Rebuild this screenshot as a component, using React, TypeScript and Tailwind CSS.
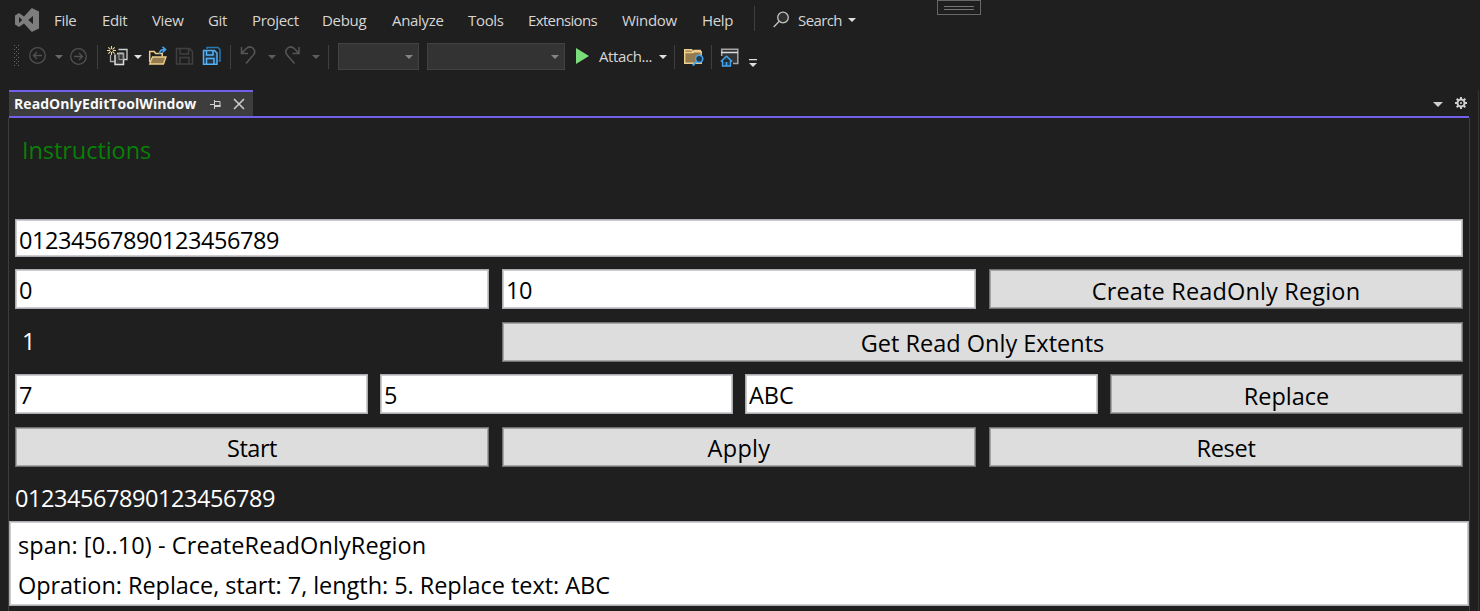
import React from "react";

const menus: [string, string][] = [
  ["File", "w-[48px]"],
  ["Edit", "w-[50px]"],
  ["View", "w-[56px]"],
  ["Git", "w-[44px]"],
  ["Project", "w-[70px]"],
  ["Debug", "w-[70px]"],
  ["Analyze", "w-[76px]"],
  ["Tools", "w-[60px]"],
  ["Extensions", "w-[94px] tracking-[-0.64px]"],
  ["Window", "w-[80px]"],
  ["Help", "w-[52px]"],
];

function Caret({ className = "" }: { className?: string }) {
  return (
    <svg className={`block shrink-0 ${className}`} width="8" height="4" viewBox="0 0 8 4" fill="currentColor">
      <path d="M0 0h8L4 4z" />
    </svg>
  );
}

function Field({ value, className = "" }: { value: string; className?: string }) {
  return (
    <div className={`flex items-center border border-[#abadb3] bg-white pl-[3px] text-black shadow-[inset_0_0_0_1px_#cdcdcf] ${className}`}>
      <span className="block leading-8">{value}</span>
    </div>
  );
}

function Button({ label, className = "pt-1" }: { label: string; className?: string }) {
  return (
    <button className={`flex h-10 items-center justify-center border border-[#707070] bg-[#dddddd] text-black shadow-[inset_0_0_0_1px_#a6a6a6] ${className}`}>
      <span className="block leading-8">{label}</span>
    </button>
  );
}

function Logo() {
  return (
    <svg className="block" width="26" height="26" viewBox="0 0 26 26">
      <path
        fill="#7d7d7d"
        fillRule="evenodd"
        d="M1 8.500 5 6l5 3.400L17.800 1 25 4.500v17L17.800 25 10 16.600 5 20l-4-2.500zM5 10v6l3.200-3zM19 9l-4.800 4 4.800 4z"
      />
    </svg>
  );
}

function ToolIcon({ children, className = "", w = 20 }: { children: React.ReactNode; className?: string; w?: number }) {
  return (
    <svg className={`mb-px block shrink-0 ${className}`} width={w} height="20" viewBox={`0 0 ${w} 20`} fill="none">
      {children}
    </svg>
  );
}

function Grip() {
  const dots = [];
  for (let r = 0; r < 11; r++) {
    const y = r * 2;
    if (r % 2 === 0) dots.push(<rect key={`a${r}`} x="0" y={y} width="1" height="1" />, <rect key={`b${r}`} x="4" y={y} width="1" height="1" />);
    else dots.push(<rect key={`c${r}`} x="2" y={y} width="1" height="1" />);
  }
  return (
    <svg className="mb-px ml-[14px] block" width="6" height="22" fill="#686868">
      {dots}
    </svg>
  );
}

function Toolbar() {
  return (
    <div className="flex h-[33px] items-center text-[#8a8a8a]">
      <Grip />
      <ToolIcon className="ml-2">
        <g stroke="#505050" strokeWidth="1.3">
          <circle cx="9.500" cy="9.500" r="7.800" />
          <path d="M14 9.500H5.500M9 6 5.500 9.500 9 13" />
        </g>
      </ToolIcon>
      <Caret className="ml-[7px] text-[#686868]" />
      <ToolIcon className="ml-[6px] mt-px">
        <g stroke="#505050" strokeWidth="1.3">
          <circle cx="9.500" cy="9.500" r="7.800" />
          <path d="M5 9.500h8.500M10 6l3.500 3.500L10 13" />
        </g>
      </ToolIcon>
      <div className="ml-[8px] h-6 w-px bg-[#3f3f3f]" />
      <ToolIcon className="ml-[9px]" w={21}>
        <path d="M11.500 3.500h8.500v10h-3" stroke="#d0d0d0" strokeWidth="1.300" />
        <path d="M3.500 9v6.500h4" stroke="#a8a8a8" strokeWidth="1.300" />
        <path d="M8 8.500V18.500h8.500V7.500H10" fill="#383838" stroke="#dedede" strokeWidth="1.500" />
        <path d="M12 7h4.500v6.500H12z" stroke="#9a9a9a" />
        <path d="M4.500 0v9M0 4.500h9M1.300 1.300l6.400 6.400M7.700 1.300 1.300 7.700" stroke="#f0d69a" strokeWidth="1.100" />
        <circle cx="4.500" cy="4.500" r="1.400" fill="#1f1f1f" />
      </ToolIcon>
      <Caret className="ml-[6px] text-[#e0e0e0]" />
      <ToolIcon className="ml-[6px]">
        <path d="M1.700 16V5.500h4.500l1.500 2h6.500v3" stroke="#efcf8b" strokeWidth="1.500" />
        <path d="M4.500 11H18l-2.500 7H1.700z" fill="#947b50" stroke="#efcf8b" strokeWidth="1.300" />
        <path d="M11.500 8c0-3 1.500-4.500 5-4.500M14.500.8l3 2.700-3 3" stroke="#45a5ee" strokeWidth="1.600" />
      </ToolIcon>
      <ToolIcon className="ml-[7px]">
        <path d="M1.500 2.500h13l3 3V18h-16zM5 2.500V8h8.500V2.500M5 18v-6.500h9V18" stroke="#404040" strokeWidth="1.500" />
      </ToolIcon>
      <ToolIcon className="ml-[7px]">
        <path d="M5 3V1.500h11l2 2V15h-1.500" stroke="#2878ad" strokeWidth="1.500" />
        <path d="M1.500 4.500h11l2.500 2.500V18.200H1.500z" fill="#213747" stroke="#55b1f5" strokeWidth="1.500" />
        <path d="M4.500 4.500V9H11V4.500M4.500 18v-5.500h7.500V18" stroke="#55b1f5" strokeWidth="1.500" />
      </ToolIcon>
      <div className="ml-[8px] h-6 w-px bg-[#3f3f3f]" />
      <ToolIcon className="ml-[9px]">
        <path d="M1.500 1v6.500H8M2 7l4-4.300c2.500-2.300 5-2.300 7-.5 2.200 2.200 2.100 5 0 7.200L6 17.500" stroke="#565656" strokeWidth="1.500" />
      </ToolIcon>
      <Caret className="ml-[8px] text-[#5d5d5d]" />
      <ToolIcon className="ml-[7px]">
        <path d="M16 1v6.500H9.500M15.500 7l-4-4.300C9 .4 6.500.4 4.500 2.200c-2.200 2.200-2.100 5 0 7.200l7 8.100" stroke="#565656" strokeWidth="1.500" />
      </ToolIcon>
      <Caret className="ml-[9px] text-[#5d5d5d]" />
      <div className="ml-[8px] h-6 w-px bg-[#3f3f3f]" />
      <div className="ml-[9px] flex h-[27px] w-[81px] items-center justify-end border border-[#424242] bg-[#333333] pr-[5px]">
        <Caret className="text-[#858585]" />
      </div>
      <div className="ml-2 flex h-[27px] w-[138px] items-center justify-end border border-[#424242] bg-[#333333] pr-[5px]">
        <Caret className="text-[#858585]" />
      </div>
      <svg className="mb-[2px] ml-[11px] block" width="13" height="18" viewBox="0 0 13 18">
        <path d="M0 1v16l13-8z" fill="#7bdc7b" />
      </svg>
      <span className="ml-[10px] w-[54px] whitespace-nowrap pb-px text-[15px] leading-5 tracking-[-0.4px] text-[#d6d6d6]">Attach...</span>
      <Caret className="ml-[6px] text-[#e0e0e0]" />
      <div className="ml-[7px] h-6 w-px bg-[#3f3f3f]" />
      <ToolIcon className="ml-[9px] mt-px" w={21}>
        <path d="M.7 16.300V2.700h7l1 2h8.500v11.600z" fill="#947b50" stroke="#efcf8b" strokeWidth="1.400" />
        <path d="M1 5.500h8l1-2h7" stroke="#efcf8b" strokeWidth="1.400" />
        <circle cx="15.200" cy="11.800" r="3.600" fill="#263c4b" stroke="#45a5ee" strokeWidth="1.500" />
        <path d="m12.700 14.500-4 4" stroke="#45a5ee" strokeWidth="1.800" />
      </ToolIcon>
      <div className="ml-[6px] h-6 w-px bg-[#3f3f3f]" />
      <ToolIcon className="ml-[8px] mt-px" w={20}>
        <path d="M1.700 9V2.200h16.100V16.500H13" fill="#343434" stroke="#a6a6a6" strokeWidth="1.500" />
        <path d="M1 5.500h17" stroke="#dedede" strokeWidth="1.500" />
        <path d="M2.500 13v6h8v-6M.8 14.500l5.700-5.200 5.700 5.200" fill="#243c4c" stroke="#45a5ee" strokeWidth="1.400" />
        <path d="M6.500 19v-4" stroke="#45a5ee" strokeWidth="1.600" />
      </ToolIcon>
      <svg className="ml-[9px] mt-[13px] block" width="8" height="8" viewBox="0 0 8 8" fill="#dedede">
        <path d="M0 0h8v1.300H0zM0 4h8L4 8z" />
      </svg>
    </div>
  );
}

export default function App() {
  return (
    <div className="flex h-[611px] w-[1480px] flex-col overflow-hidden bg-[#1f1f1f] font-['Open_Sans','Noto_Sans',sans-serif]">
      <header className="flex h-10 items-center">
        <div className="ml-[14px] w-10">
          <Logo />
        </div>
        <nav className="flex text-[15px] leading-5 tracking-[-0.32px] text-[#d6d6d6]">
          {menus.map(([m, w]) => (
            <span key={m} className={`whitespace-nowrap ${w}`}>{m}</span>
          ))}
        </nav>
        <div className="mb-[3px] h-[25px] w-px bg-[#3f3f3f]" />
        <svg className="mb-[2px] ml-[18px] block" width="17" height="17" viewBox="0 0 17 17" fill="none" stroke="#c4c4c4" strokeWidth="1.300">
          <circle cx="10" cy="6.500" r="5.300" fill="#303030" />
          <path d="m6 10.500-5.300 5.500" />
        </svg>
        <span className="ml-[8px] w-[44px] text-[15px] leading-5 tracking-[-0.6px] text-[#d6d6d6]">Search</span>
        <Caret className="ml-[6px] text-[#dedede]" />
        <div className="ml-[81px] flex h-[15px] w-[44px] flex-col items-center gap-[2px] self-start border border-[#686868] pt-[5px]">
          <div className="h-px w-[30px] bg-[#747474]" />
          <div className="h-px w-[30px] bg-[#747474]" />
        </div>
      </header>
      <Toolbar />
      <div className="mt-[17px] flex min-h-0 flex-1">
        <div className="ml-2 flex w-[1462px] flex-col">
          <div className="ml-px mr-px flex h-7 items-stretch border-b-2 border-[#7160e8]">
            <div className="flex w-[244px] items-center border-t-2 border-[#7160e8] bg-[#3d3d3d] pl-[5px]">
              <span className="w-[186px] whitespace-nowrap text-[14px] font-bold leading-5 tracking-[0.07px] text-[#fafafa]">ReadOnlyEditToolWindow</span>
              <svg className="ml-[10px] block" width="11" height="9" viewBox="0 0 11 9" fill="none" stroke="#d0d0d0">
                <path d="M0 4.500h4M4.500 0v9M5 1.500h5v5H5" />
                <path d="M5 6h5.500" strokeWidth="2" />
              </svg>
              <svg className="ml-[12px] block" width="12" height="12" viewBox="0 0 12 12" stroke="#d0d0d0" strokeWidth="1.500">
                <path d="m1 1 10 10M11 1 1 11" />
              </svg>
            </div>
            <div className="flex flex-1 items-center justify-end">
              <svg className="mr-[12px] mt-[3px] block" width="10" height="5" viewBox="0 0 10 5" fill="#d0d0d0">
                <path d="M0 0h10L5 5z" />
              </svg>
              <svg className="mr-[2px] block" width="12" height="12" viewBox="0 0 12 12" fill="none" stroke="#d0d0d0">
                <circle cx="6" cy="6" r="3.500" strokeWidth="2" />
                <path strokeWidth="2" d="M6 0v2M6 10v2M0 6h2M10 6h2M1.700 1.700l1.500 1.500M8.800 8.800l1.500 1.500M10.300 1.700 8.800 3.200M3.200 8.800l-1.500 1.500" />
                <circle cx="6" cy="6" r="1" fill="#d0d0d0" stroke="none" />
              </svg>
            </div>
          </div>
          <main className="flex flex-1 flex-col border-x border-[#3d3d3d] text-[23.500px] tracking-[-0.44px]">
            <div className="h-[101px] pl-[13px] pt-4 leading-8 tracking-[-0.06px] text-[#078007]">Instructions</div>
            <div className="flex flex-col px-[6px]">
              <Field value="01234567890123456789" className="h-[38px] pt-1" />
              <div className="mt-3 grid grid-cols-3 gap-[13px]">
                <Field value="0" className="h-10 pt-[2px]" />
                <Field value="10" className="h-10 pt-[2px]" />
                <Button label="Create ReadOnly Region" className="pt-1 tracking-[0.16px]" />
              </div>
              <div className="mt-[13px] grid grid-cols-3 gap-[13px]">
                <span className="pl-[7px] pt-[3px] leading-8 text-white">1</span>
                <Button label="Get Read Only Extents" className="col-span-2 pt-[2px] tracking-[0px]" />
              </div>
              <div className="mt-3 grid grid-cols-4 gap-3">
                <Field value="7" className="h-10 pt-[2px]" />
                <Field value="5" className="h-10 pt-[2px]" />
                <Field value="ABC" className="h-10 pt-[2px] tracking-[0px]" />
                <Button label="Replace" className="pt-1 tracking-[0px]" />
              </div>
              <div className="mt-[13px] grid grid-cols-3 gap-[13px]">
                <Button label="Start" className="pt-[2px]" />
                <Button label="Apply" className="pt-[2px] tracking-[0.3px]" />
                <Button label="Reset" className="pt-[2px] tracking-[-0.3px]" />
              </div>
              <div className="h-[54px] pt-[15px] leading-8 text-white">01234567890123456789</div>
            </div>
            <div className="h-[85px] border border-[#abadb3] bg-white pl-2 pt-[3px] leading-10 text-black shadow-[inset_0_0_0_1px_#cdcdcf]">
              <div className="tracking-[0.09px]">span: [0..10) - CreateReadOnlyRegion</div>
              <div className="tracking-[-0.05px]">Opration: Replace, start: 7, length: 5. Replace text: ABC</div>
            </div>
          </main>
        </div>
        <div className="ml-2 w-px bg-[#343434]" />
      </div>
    </div>
  );
}
